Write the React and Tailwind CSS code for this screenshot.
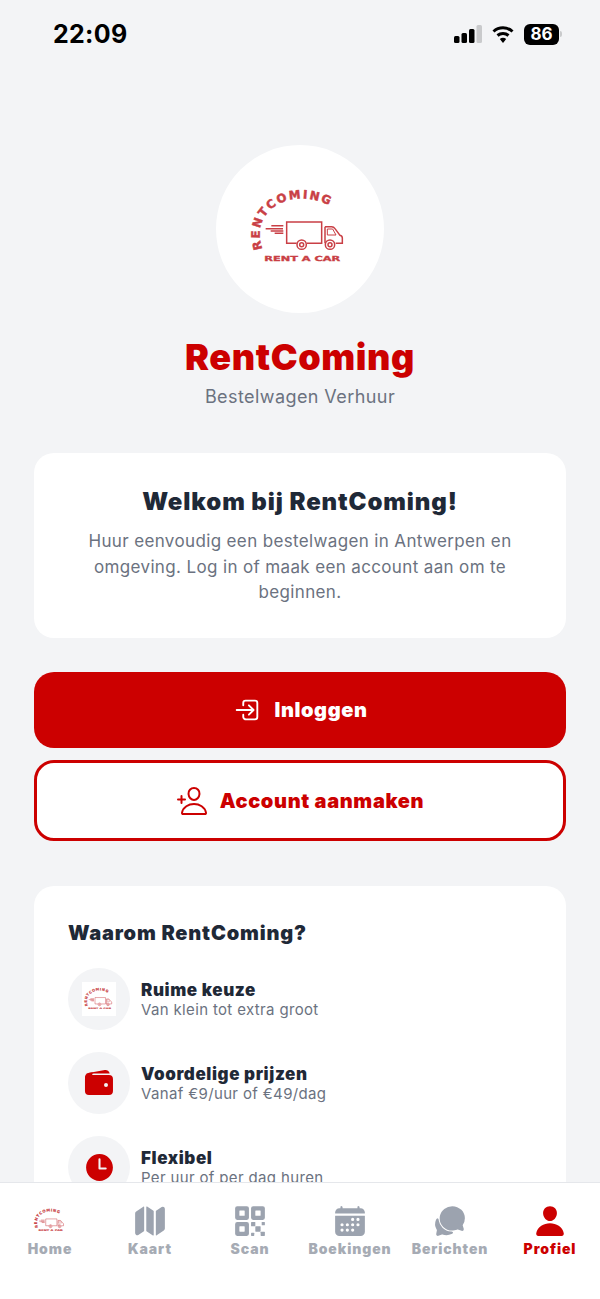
import React from "react";
import { IoLogInOutline, IoPersonAddOutline, IoMap, IoQrCode, IoCalendar, IoChatbubbles, IoPerson, IoWallet, IoTime } from "react-icons/io5";

function Logo({ className, id }) {
  const c = "#c93f45";
  return (
    <svg viewBox="150 140 300 225" className={className} fill="none" overflow="visible">
      <defs>
        <path id={id} d="M188 314 C142 190 290 116 410 196 L440 216" />
      </defs>
      <text fill={c} stroke={c} strokeWidth="1.5" fontFamily="'DejaVu Sans', sans-serif" fontWeight="700" fontSize="35" letterSpacing="5.5">
        <textPath href={`#${id}`}>RENTCOMING</textPath>
      </text>
      <g stroke={c} strokeWidth="4.5">
        <path d="M197 253h52M212 260h38M224 267h26M214 244h36" />
        <path d="M290 297h-30v-64h105v64h-44" />
        <path d="M375 247h20q6 0 10 6l15 20q7 2 7 8v16h-20M375 247v50" />
        <path d="M382 254h16l10 18h-26z" strokeWidth="3" />
        <circle cx="305" cy="301" r="14" />
        <circle cx="305" cy="301" r="6" />
        <circle cx="390" cy="301" r="14" />
        <circle cx="390" cy="301" r="6" />
      </g>
      <text x="193" y="350" textLength="228" lengthAdjust="spacingAndGlyphs" fill={c} stroke={c} strokeWidth="1" fontFamily="'DejaVu Sans', sans-serif" fontWeight="700" fontSize="21">RENT A CAR</text>
    </svg>
  );
}

function Feature({ icon, title, sub }) {
  return (
    <div className="flex items-center gap-[11px]">
      <div className="w-[62px] h-[62px] shrink-0 rounded-full bg-[#f3f4f6] flex items-center justify-center">{icon}</div>
      <div>
        <div className="text-[17px] leading-[22px] font-black tracking-[0.6px] text-[#1f2937]">{title}</div>
        <div className="text-[15px] leading-[18px] tracking-[0.35px] text-[#6b7280]">{sub}</div>
      </div>
    </div>
  );
}

function Tab({ icon, label, active }) {
  return (
    <div className="flex-1 flex flex-col items-center">
      <div className="h-[34px] flex items-center justify-center">{icon}</div>
      <div className={`mt-[2px] text-[14px] leading-[18px] font-black tracking-[0.9px] ${active ? "text-[#cc0000]" : "text-[#a6abb4]"}`}>{label}</div>
    </div>
  );
}

export default function App() {
  return (
    <div className="w-[600px] h-[1299px] flex flex-col overflow-hidden bg-[#f3f4f6] font-['Inter',sans-serif]">
      <main className="flex-1 min-h-0 overflow-hidden">
        <div className="h-[68px] flex items-center justify-between pl-[53px] pr-[38px]">
          <span className="text-[25px] leading-none font-bold text-black tracking-[0.3px]">22:09</span>
          <div className="flex items-center gap-[9px]">
            <svg width="28" height="18" viewBox="0 0 28 18">
              <rect x="0" y="11" width="5.5" height="7" rx="1.5" fill="#000" />
              <rect x="7.5" y="8" width="5.5" height="10" rx="1.5" fill="#000" />
              <rect x="15" y="4" width="5.5" height="14" rx="1.5" fill="#000" />
              <rect x="22.5" y="0" width="5.5" height="18" rx="1.5" fill="#c9cacc" />
            </svg>
            <svg width="24" height="18" viewBox="0 0 22 18" fill="none" stroke="#000" strokeWidth="3">
              <path d="M1.5 6.5a14 14 0 0 1 19 0" />
              <path d="M5.5 10.5a8.5 8.5 0 0 1 11 0" />
              <path d="M11 18l-3.2-4a5 5 0 0 1 6.4 0z" fill="#000" stroke="none" />
            </svg>
            <div className="flex items-center">
              <div className="w-[35px] h-[21px] rounded-[6px] bg-black flex items-center justify-center text-white text-[17px] leading-none font-bold">86</div>
              <div className="w-[2px] h-[6px] ml-[1px] bg-[#c9cacc] rounded-r-sm" />
            </div>
          </div>
        </div>

        <div className="flex flex-col items-center">
          <div className="mt-[77px] w-[168px] h-[168px] rounded-full bg-white flex items-center justify-center">
            <Logo id="logoMain" className="w-[100px] h-[75px] mt-[-1px]" />
          </div>
          <h1 className="mt-[22px] text-[36px] leading-[44px] font-black tracking-[0.6px] text-[#cc0000]">RentComing</h1>
          <p className="mt-[4px] text-[18px] leading-[28px] tracking-[0.42px] text-[#6b7280]">Bestelwagen Verhuur</p>
        </div>

        <div className="mx-[34px] mt-[42px] h-[185px] rounded-[20px] bg-white px-[34px] pt-[33px] text-center">
          <h2 className="text-[24px] leading-[32px] font-black tracking-[0.9px] text-[#1f2937]">Welkom bij RentComing!</h2>
          <p className="mt-[11px] -mx-[10px] text-[17px] leading-[25.5px] tracking-[0.36px] text-[#6b7280]">Huur eenvoudig een bestelwagen in Antwerpen en omgeving. Log in of maak een account aan om te beginnen.</p>
        </div>

        <div className="mx-[34px] mt-[34px] h-[76px] rounded-[20px] bg-[#cc0000] flex items-center justify-center gap-[12px] text-white">
          <IoLogInOutline size={30} />
          <span className="text-[20px] font-black tracking-[0.6px]">Inloggen</span>
        </div>
        <div className="mx-[34px] mt-[12px] h-[81px] rounded-[20px] border-[3px] border-[#cc0000] bg-white flex items-center justify-center gap-[12px] text-[#cc0000]">
          <IoPersonAddOutline size={32} />
          <span className="text-[20px] font-black tracking-[0.65px]">Account aanmaken</span>
        </div>

        <div className="mx-[34px] mt-[45px] rounded-[20px] bg-white px-[34px] pt-[33px] pb-[34px]">
          <h3 className="text-[20px] leading-[28px] font-black tracking-[0.82px] text-[#1f2937]">Waarom RentComing?</h3>
          <div className="mt-[21px] flex flex-col gap-[22px]">
            <Feature icon={<div className="w-[34px] h-[34px] bg-white flex items-center justify-center"><Logo id="logoFeat" className="w-[30px] h-[23px]" /></div>} title="Ruime keuze" sub="Van klein tot extra groot" />
            <Feature icon={<IoWallet size={32} className="text-[#cc0000]" />} title="Voordelige prijzen" sub="Vanaf €9/uur of €49/dag" />
            <Feature icon={<IoTime size={33} className="text-[#cc0000]" />} title="Flexibel" sub="Per uur of per dag huren" />
          </div>
        </div>
      </main>

      <nav className="h-[117px] shrink-0 bg-white border-t border-[#e5e7eb] flex pt-[21px]">
        <Tab icon={<Logo id="logoTab" className="w-[32px] h-[24px]" />} label="Home" />
        <Tab icon={<IoMap size={34} className="text-[#9ca3af]" />} label="Kaart" />
        <Tab icon={<IoQrCode size={34} className="text-[#9ca3af]" />} label="Scan" />
        <Tab icon={<IoCalendar size={34} className="text-[#9ca3af]" />} label="Boekingen" />
        <Tab icon={<IoChatbubbles size={34} className="text-[#9ca3af]" />} label="Berichten" />
        <Tab icon={<IoPerson size={34} className="text-[#cc0000]" />} label="Profiel" active />
      </nav>
    </div>
  );
}
